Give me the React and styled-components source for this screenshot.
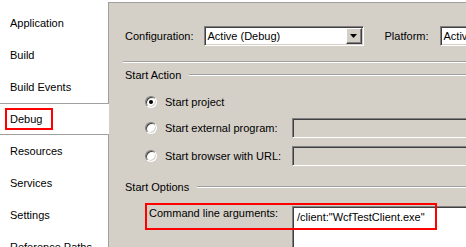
import React from "react";
import styled, { createGlobalStyle, css } from "styled-components";

const Global = createGlobalStyle`
  html, body { margin: 0; padding: 0; background: #fff; overflow: hidden; }
`;

const Page = styled.div`
  display: flex;
  width: 466px;
  height: 247px;
  overflow: hidden;
  font-family: "Liberation Sans", Arial, sans-serif;
  font-size: 11px;
  color: #000;
  background: #fff;
`;

const TabList = styled.div`
  width: 108px;
  flex-shrink: 0;
  padding-top: 7px;
  display: flex;
  flex-direction: column;
  background: #fff;
  position: relative;
  z-index: 1;
`;

const Tab = styled.div`
  flex-shrink: 0;
  height: 32px;
  box-sizing: border-box;
  display: flex;
  align-items: center;
  padding-left: 10px;
  white-space: nowrap;
  background: #fff;
  ${(p) =>
    p.$selected &&
    css`
      border-top: 1px solid #a0a0a0;
      border-bottom: 1px solid #a0a0a0;
      margin-right: -1px;
    `}
`;

const Marked = styled.span`
  display: inline-flex;
  align-items: center;
  box-sizing: border-box;
  height: 22px;
  width: 48px;
  margin-left: -5px;
  padding-left: 3px;
  border: 2px solid #ff0000;
`;

const Panel = styled.div`
  flex: 1;
  min-width: 0;
  margin-top: 2px;
  border-top: 1px solid #a0a0a0;
  border-left: 1px solid #a0a0a0;
  background: #d4d0c8;
  padding-left: 16px;
  overflow: hidden;
  display: flex;
  flex-direction: column;
`;

const ConfigRow = styled.div`
  flex-shrink: 0;
  display: flex;
  align-items: center;
  height: 20px;
  margin-top: 23px;
  white-space: nowrap;
`;

const sunken = css`
  box-sizing: border-box;
  border: 1px solid;
  border-color: #808080 #ffffff #ffffff #808080;
  box-shadow: inset 1px 1px 0 #404040, inset -1px -1px 0 #d4d0c8;
`;

const Select = styled.div`
  ${sunken};
  flex-shrink: 0;
  width: ${(p) => p.$width}px;
  height: 20px;
  margin-left: ${(p) => p.$gap}px;
  background: #fff;
  display: flex;
  align-items: center;
  padding-left: 3px;
  white-space: nowrap;
  overflow: hidden;
`;

const DropButton = styled.div`
  box-sizing: border-box;
  width: 16px;
  height: 16px;
  margin-left: auto;
  margin-right: 1px;
  background: #d4d0c8;
  border: 1px solid;
  border-color: #ffffff #404040 #404040 #ffffff;
  box-shadow: inset -1px -1px 0 #808080;
  display: flex;
  align-items: center;
  justify-content: center;
`;

const FieldLabel = styled.span`
  margin-left: ${(p) => p.$gap || 0}px;
  flex-shrink: 0;
`;

const Etched = styled.div`
  flex-shrink: 0;
  height: 0;
  border-top: 1px solid #a0a0a0;
  border-bottom: 1px solid #ffffff;
  margin: 15px 0 0 -2px;
`;

const GroupHeader = styled.div`
  flex-shrink: 0;
  display: flex;
  align-items: center;
  gap: 8px;
  height: 14px;
  margin-top: ${(p) => p.$mt}px;
  white-space: nowrap;
  &::after {
    content: "";
    flex: 1;
    height: 0;
    border-top: 1px solid #a0a0a0;
    border-bottom: 1px solid #ffffff;
  }
`;

const FieldRow = styled.div`
  flex-shrink: 0;
  display: grid;
  grid-template-columns: 167px 200px;
  height: 20px;
  align-items: center;
  margin-top: ${(p) => p.$mt}px;
  white-space: nowrap;
`;

const RadioLabel = styled.label`
  display: flex;
  align-items: center;
  gap: 8px;
  padding-left: 20px;
`;

const Radio = styled.span`
  box-sizing: border-box;
  width: 12px;
  height: 12px;
  border-radius: 50%;
  border: 1px solid;
  border-color: #808080 #ffffff #ffffff #808080;
  box-shadow: inset 1px 1px 0 #404040, inset -1px -1px 0 #d4d0c8;
  background: #fff;
  display: flex;
  align-items: center;
  justify-content: center;
  &::after {
    content: "";
    width: 4px;
    height: 4px;
    border-radius: 50%;
    background: ${(p) => (p.$checked ? "#000" : "transparent")};
  }
`;

const TextBox = styled.div`
  ${sunken};
  width: 200px;
  height: ${(p) => p.$height || 20}px;
  background: ${(p) => (p.$disabled ? "#d4d0c8" : "#ffffff")};
  padding: 3px 4px;
  line-height: 14px;
  white-space: nowrap;
`;

const CommandRow = styled.div`
  flex-shrink: 0;
  position: relative;
  display: grid;
  grid-template-columns: 167px 200px;
  align-items: start;
  margin-top: 12px;
  white-space: nowrap;
`;

const CommandLabel = styled.span`
  padding-left: 24px;
  line-height: 14px;
`;

const Callout = styled.div`
  position: absolute;
  left: 20px;
  top: -3px;
  width: 292px;
  height: 27px;
  box-sizing: border-box;
  border: 2px solid #ff0000;
  pointer-events: none;
`;

const Arrow = () => (
  <svg width="7" height="4" viewBox="0 0 7 4">
    <polygon points="0,0 7,0 3.5,4" fill="#000" />
  </svg>
);

const tabs = [
  "Application",
  "Build",
  "Build Events",
  "Debug",
  "Resources",
  "Services",
  "Settings",
  "Reference Paths",
];

export default function App() {
  return (
    <>
      <Global />
      <Page>
        <TabList>
          {tabs.map((t) =>
            t === "Debug" ? (
              <Tab key={t} $selected>
                <Marked>{t}</Marked>
              </Tab>
            ) : (
              <Tab key={t}>{t}</Tab>
            )
          )}
        </TabList>
        <Panel>
          <ConfigRow>
            <FieldLabel>Configuration:</FieldLabel>
            <Select $width={160} $gap={10}>
              Active (Debug)
              <DropButton>
                <Arrow />
              </DropButton>
            </Select>
            <FieldLabel $gap={21}>Platform:</FieldLabel>
            <Select $width={80} $gap={11}>
              Active (Any CPU)
            </Select>
          </ConfigRow>
          <Etched />
          <GroupHeader $mt={5}>Start Action</GroupHeader>
          <FieldRow $mt={10}>
            <RadioLabel>
              <Radio $checked />
              Start project
            </RadioLabel>
          </FieldRow>
          <FieldRow $mt={6}>
            <RadioLabel>
              <Radio />
              Start external program:
            </RadioLabel>
            <TextBox $disabled />
          </FieldRow>
          <FieldRow $mt={8}>
            <RadioLabel>
              <Radio />
              Start browser with URL:
            </RadioLabel>
            <TextBox $disabled />
          </FieldRow>
          <GroupHeader $mt={14}>Start Options</GroupHeader>
          <CommandRow>
            <CommandLabel>Command line arguments:</CommandLabel>
            <TextBox $height={60}>/client:"WcfTestClient.exe"</TextBox>
            <Callout />
          </CommandRow>
        </Panel>
      </Page>
    </>
  );
}
